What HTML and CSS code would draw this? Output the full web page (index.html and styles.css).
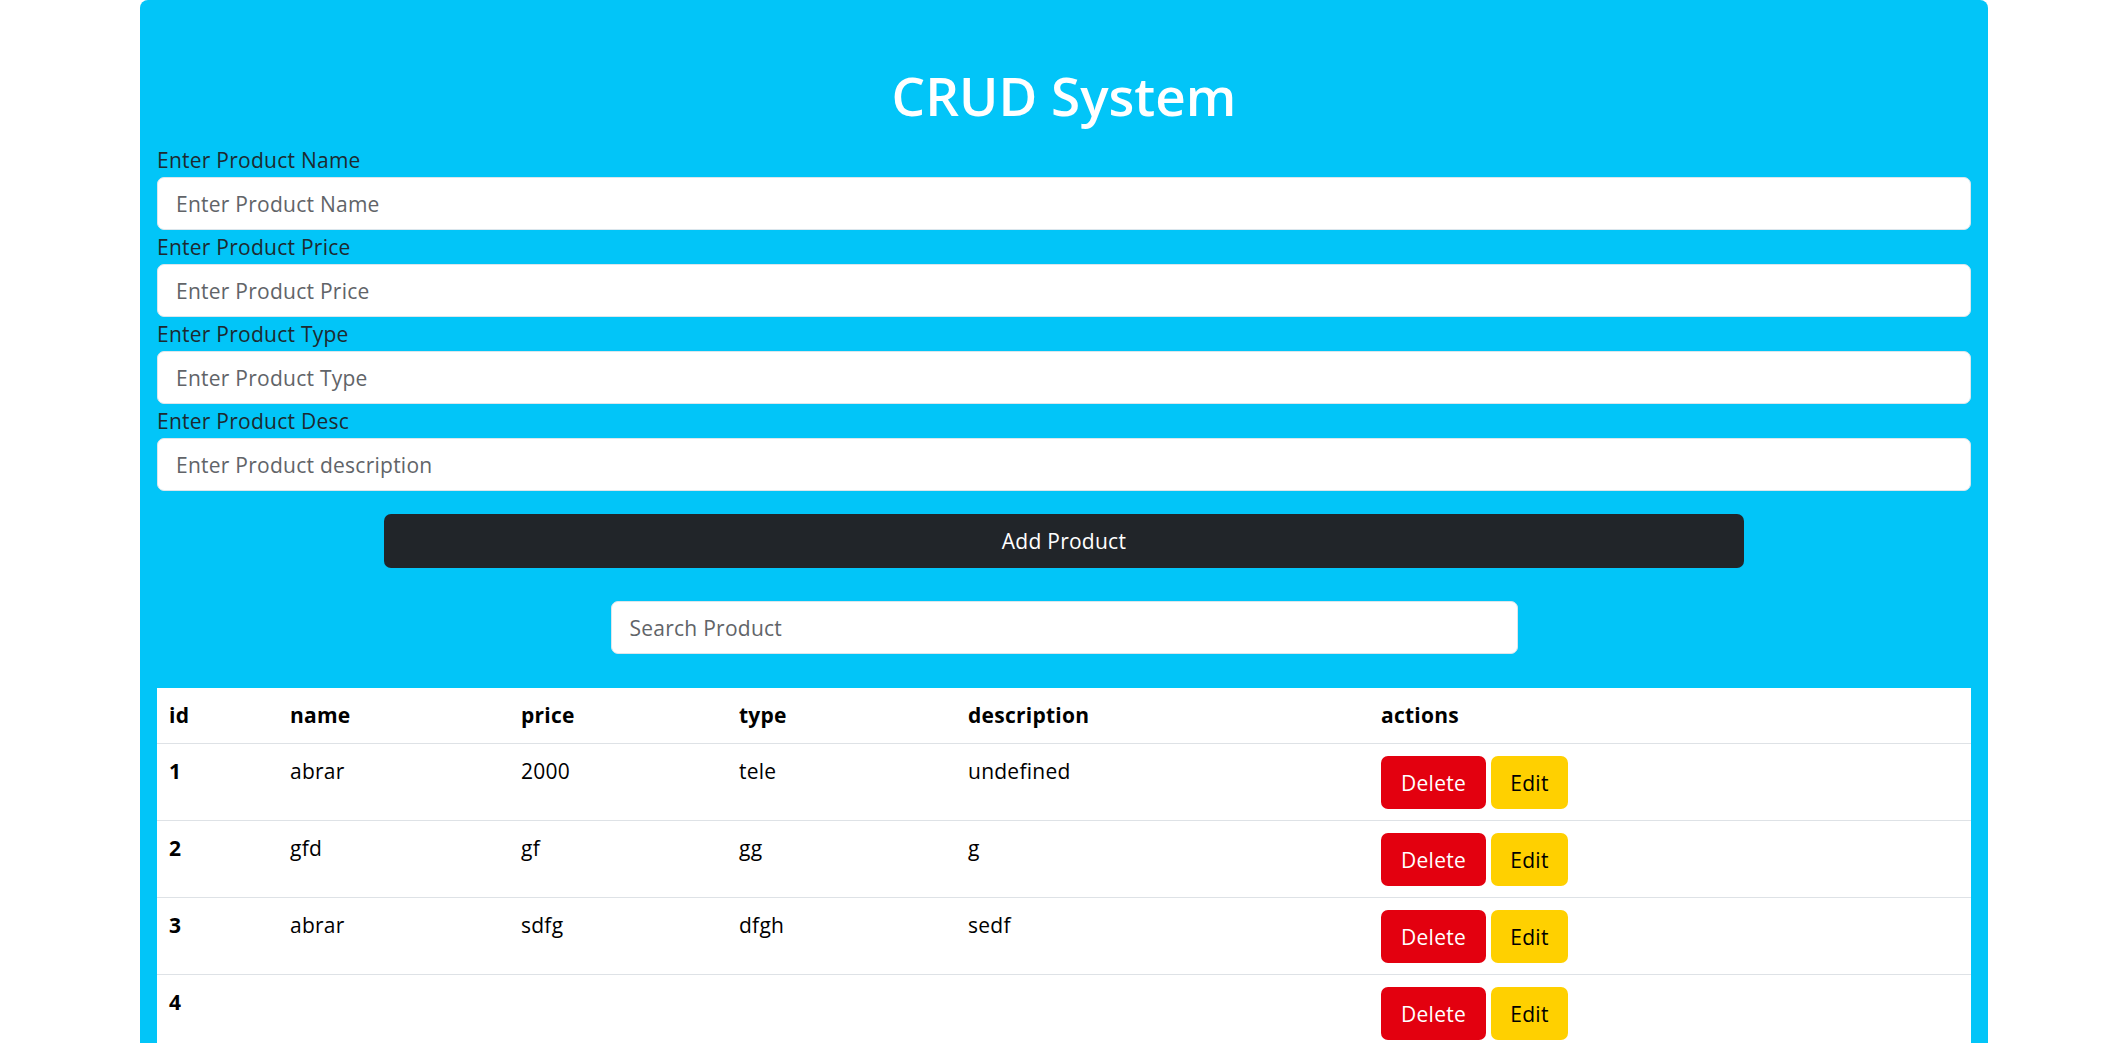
FILE: index.html
```html
<!DOCTYPE html>
<html lang="en">
<head>
<meta charset="utf-8">
<title>CRUD System</title>
<link rel="stylesheet" href="styles.css">
</head>
<body>
<main class="panel">
  <h1 class="title">CRUD System</h1>
  <form class="form">
    <label class="label" for="pname">Enter Product Name</label>
    <input class="field" id="pname" type="text" placeholder="Enter Product Name">
    <label class="label" for="pprice">Enter Product Price</label>
    <input class="field" id="pprice" type="text" placeholder="Enter Product Price">
    <label class="label" for="ptype">Enter Product Type</label>
    <input class="field" id="ptype" type="text" placeholder="Enter Product Type">
    <label class="label" for="pdesc">Enter Product Desc</label>
    <input class="field" id="pdesc" type="text" placeholder="Enter Product description">
    <button class="add-btn" type="button">Add Product</button>
  </form>
  <input class="field search" type="text" placeholder="Search Product">
  <table class="table">
    <thead>
      <tr>
        <th class="c-id">id</th>
        <th class="c-name">name</th>
        <th class="c-price">price</th>
        <th class="c-type">type</th>
        <th class="c-desc">description</th>
        <th class="c-act">actions</th>
      </tr>
    </thead>
    <tbody>
      <tr>
        <td class="idcell">1</td><td>abrar</td><td>2000</td><td>tele</td><td>undefined</td>
        <td><div class="actions"><button class="btn del" type="button">Delete</button><button class="btn edit" type="button">Edit</button></div></td>
      </tr>
      <tr>
        <td class="idcell">2</td><td>gfd</td><td>gf</td><td>gg</td><td>g</td>
        <td><div class="actions"><button class="btn del" type="button">Delete</button><button class="btn edit" type="button">Edit</button></div></td>
      </tr>
      <tr>
        <td class="idcell">3</td><td>abrar</td><td>sdfg</td><td>dfgh</td><td>sedf</td>
        <td><div class="actions"><button class="btn del" type="button">Delete</button><button class="btn edit" type="button">Edit</button></div></td>
      </tr>
      <tr>
        <td class="idcell">4</td><td></td><td></td><td></td><td></td>
        <td><div class="actions"><button class="btn del" type="button">Delete</button><button class="btn edit" type="button">Edit</button></div></td>
      </tr>
    </tbody>
  </table>
</main>
</body>
</html>
```

FILE: styles.css
```css
* { box-sizing: border-box; }

html, body {
  margin: 0;
  padding: 0;
  background: #ffffff;
}

body {
  font-family: "Open Sans", "Noto Sans", sans-serif;
  font-size: 21px;
  letter-spacing: 0.25px;
  color: #212529;
}

.panel {
  width: 1848px;
  margin: 0 0 0 140px;
  background: #02c5f8;
  border-radius: 8px;
  padding: 63px 17px 40px;
}

.title {
  margin: 0 0 15px;
  text-align: center;
  color: #ffffff;
  font-size: 53px;
  font-weight: 600;
  letter-spacing: 0;
  line-height: 65px;
}

.form {
  display: flex;
  flex-direction: column;
}

.label {
  display: block;
  line-height: 30px;
  padding-top: 2px;
  margin-bottom: 2px;
  color: #1d2a30;
}

.field {
  display: block;
  width: 100%;
  height: 53px;
  padding: 0 18px;
  border: 1px solid #dbe6ec;
  border-radius: 7px;
  background: #ffffff;
  font-family: inherit;
  font-size: 21px;
  letter-spacing: 0.25px;
  color: #212529;
  outline: none;
}

.field::placeholder {
  color: #616468;
}

.add-btn {
  display: block;
  width: 75%;
  height: 54px;
  margin: 23px auto 0;
  border: none;
  border-radius: 7px;
  background: #212529;
  color: #ffffff;
  font-family: inherit;
  font-size: 21px;
  letter-spacing: 0.25px;
}

.search {
  width: 50%;
  margin: 33px auto 0;
}

.table {
  width: 100%;
  margin-top: 34px;
  border-collapse: collapse;
  table-layout: fixed;
  background: #ffffff;
  color: #000000;
}

.table th,
.table td {
  text-align: left;
  vertical-align: top;
  border-bottom: 1px solid #dee2e6;
  line-height: 31px;
}

.table th {
  padding: 12px;
  font-weight: 700;
}

.table td {
  padding: 12px 12px 11px;
}

.table .idcell { font-weight: 700; }

.c-id { width: 121px; }
.c-name { width: 231px; }
.c-price { width: 218px; }
.c-type { width: 229px; }
.c-desc { width: 413px; }

.actions {
  display: flex;
  gap: 5px;
}

.btn {
  height: 53px;
  border: none;
  border-radius: 7px;
  font-family: inherit;
  font-size: 21px;
  letter-spacing: 0.25px;
  padding: 0;
  cursor: pointer;
}

.del {
  width: 105px;
  background: #e3000f;
  color: #ffffff;
}

.edit {
  width: 77px;
  background: #ffd000;
  color: #000000;
}
```
